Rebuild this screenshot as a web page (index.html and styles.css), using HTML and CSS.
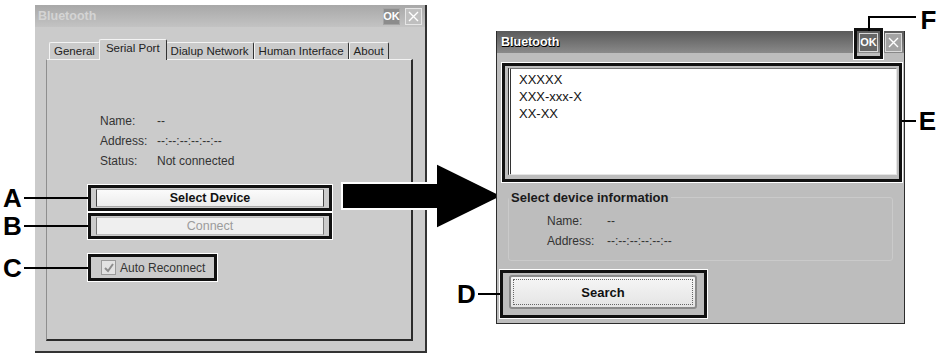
FILE: index.html
```html
<!DOCTYPE html>
<html lang="en">

<head>
    <meta charset="utf-8">
    <title>Bluetooth serial port settings</title>
    <link rel="stylesheet" href="styles.css">
</head>

<body>
    <div class="diagram">

        <!-- settings dialog, left -->
        <div class="win win-settings">
            <div class="titlebar">
                <span class="title">Bluetooth</span>
                <span class="tbtn tbtn-ok">OK</span>
                <span class="tbtn tbtn-close">
                    <svg width="11" height="11" viewBox="0 0 11 11"><path d="M1 1L10 10M10 1L1 10" /></svg>
                </span>
            </div>
            <div class="win-body">
                <div class="tabs">
                    <span class="tab">General</span>
                    <span class="tab active">Serial Port</span>
                    <span class="tab">Dialup Network</span>
                    <span class="tab">Human Interface</span>
                    <span class="tab">About</span>
                </div>
                <div class="tab-panel">
                    <dl class="info">
                        <dt>Name:</dt>
                        <dd>--</dd>
                        <dt>Address:</dt>
                        <dd>--:--:--:--:--:--</dd>
                        <dt>Status:</dt>
                        <dd>Not connected</dd>
                    </dl>

                    <div class="callout callout-a">
                        <span class="mark mark-left"><b>A</b><i></i></span>
                        <button class="btn btn-main">Select Device</button>
                    </div>
                    <div class="callout callout-b">
                        <span class="mark mark-left"><b>B</b><i></i></span>
                        <button class="btn btn-off">Connect</button>
                    </div>
                    <div class="callout callout-c">
                        <span class="mark mark-left"><b>C</b><i></i></span>
                        <label class="check">
                            <span class="box">
                                <svg width="12" height="12" viewBox="0 0 12 12"><path d="M2 6L5 9L10 2" /></svg>
                            </span>
                            Auto Reconnect
                        </label>
                    </div>
                </div>
            </div>
        </div>

        <!-- arrow between the two screens -->
        <svg class="arrow" width="170" height="76" viewBox="338 159 170 76">
            <polygon points="342,183 436,183 436,163 503,196 436,229 436,209 342,209" />
        </svg>

        <!-- search dialog, right -->
        <div class="win win-search">
            <div class="titlebar">
                <span class="title">Bluetooth</span>
                <span class="tbtn tbtn-ok">
                    OK
                    <span class="callout-f">
                        <span class="mark-f"><b>F</b></span>
                    </span>
                </span>
                <span class="tbtn tbtn-close">
                    <svg width="11" height="11" viewBox="0 0 11 11"><path d="M1 1L10 10M10 1L1 10" /></svg>
                </span>
            </div>
            <div class="win-body">
                <div class="callout callout-e">
                    <span class="mark mark-right"><i></i><b>E</b></span>
                    <div class="listbox">
                        <div>XXXXX</div>
                        <div>XXX-xxx-X</div>
                        <div>XX-XX</div>
                    </div>
                </div>

                <fieldset class="group">
                    <legend>Select device information</legend>
                    <dl class="info">
                        <dt>Name:</dt>
                        <dd>--</dd>
                        <dt>Address:</dt>
                        <dd>--:--:--:--:--:--</dd>
                    </dl>
                </fieldset>

                <div class="callout callout-d">
                    <span class="mark mark-left"><b>D</b><i></i></span>
                    <button class="btn btn-search"><span>Search</span></button>
                </div>
            </div>
        </div>

    </div>
</body>

</html>
```

FILE: styles.css
```css
* {
    box-sizing: border-box;
}

body {
    margin: 0;
    background: #fff;
    font-family: "Liberation Sans", Arial, sans-serif;
    font-size: 12px;
    color: #222;
}

.diagram {
    position: relative;
    width: 943px;
    height: 355px;
    overflow: hidden;
}

/* windows */
.win {
    position: absolute;
    display: flex;
    flex-direction: column;
}

.win-settings {
    left: 35px;
    top: 5px;
    width: 392px;
    height: 348px;
    background: #cbcbcb;
    border-right: 2px solid #333;
    border-bottom: 2px solid #333;
}

.win-search {
    left: 496px;
    top: 31px;
    width: 409px;
    height: 293px;
    background: #bdbdbd;
    border: 1px solid #2c2c2c;
    border-top: none;
}

.titlebar {
    height: 22px;
    flex: none;
    display: flex;
    align-items: center;
    gap: 5px;
    padding: 0 3px;
}

.win-settings .titlebar {
    background: linear-gradient(#a8a8a8, #c3c3c3);
}

.win-search .titlebar {
    background: linear-gradient(#5a5a5a, #8a8a8a);
    gap: 7px;
    padding: 0 2px 0 4px;
}

.title {
    flex: 1;
    font-weight: bold;
    font-size: 12.5px;
}

.win-settings .title {
    color: #d4d4d4;
}

.win-search .title {
    color: #fff;
    text-shadow: 1px 1px 0 #000, 0 1px 0 #000;
}

.tbtn {
    position: relative;
    width: 17px;
    height: 17px;
    display: flex;
    align-items: center;
    justify-content: center;
    font-size: 11px;
    font-weight: bold;
    color: #fff;
}

.tbtn svg path {
    stroke: #fff;
    stroke-width: 1.4;
    fill: none;
}

.win-settings .tbtn-ok {
    background: #8c8c8c;
    border: 1px solid #a4a4a4;
}

.win-settings .tbtn-close {
    background: #bfbfbf;
    border: 1px solid #e6e6e6;
}

.win-search .tbtn {
    width: 19px;
    height: 19px;
}

.win-search .tbtn-ok {
    background: #666;
    border: 1px solid #d8d8d8;
}

.win-search .tbtn-close {
    width: 17px;
    background: #a3a3a3;
    border: 1px solid #dadada;
}

.win-body {
    flex: 1;
    display: flex;
    flex-direction: column;
}

.win-settings .win-body {
    padding: 12px 0 0 11px;
}

/* tabs */
.tabs {
    display: flex;
    align-items: flex-end;
    height: 20px;
    padding-left: 3px;
}

.tab {
    height: 17px;
    padding: 0 4px;
    font-size: 11.5px;
    line-height: 17px;
    color: #222;
    border: 1px solid #f4f4f4;
    border-right-color: #333;
    border-bottom: none;
    border-radius: 2px 2px 0 0;
}

.tab.active {
    position: relative;
    z-index: 1;
    height: 21px;
    margin: 0 -1px -1px;
    padding: 0 6px;
    line-height: 17px;
    background: #cbcbcb;
}

.tab-panel {
    width: 367px;
    height: 282px;
    padding: 51px 0 0 41px;
    border: 1px solid #f2f2f2;
    border-left-color: #8e8e8e;
    border-right: 2px solid #2a2a2a;
    border-bottom: 2px solid #2a2a2a;
}

.info {
    display: grid;
    grid-template-columns: 57px auto;
    grid-auto-rows: 20px;
    align-items: center;
    margin: 0 0 0 12px;
    color: #333;
}

.info dt,
.info dd {
    margin: 0;
}

/* callout boxes drawn over the screens */
.callout {
    position: relative;
    border: 3px solid #111;
    box-shadow: 0 0 0 1px #fff;
}

.mark {
    position: absolute;
    top: 50%;
    display: flex;
    align-items: center;
    transform: translateY(-50%);
}

.mark b,
.mark-f b {
    font-size: 26px;
    line-height: 26px;
    color: #000;
}

.mark i {
    flex: 1;
    height: 2px;
    background: #000;
}

.mark-left {
    right: calc(100% + 3px);
    gap: 2px;
}

.mark-right {
    left: calc(100% + 3px);
    gap: 3px;
}

.callout-a .mark,
.callout-b .mark,
.callout-c .mark {
    width: 85px;
}

.callout-a {
    width: 244px;
    margin-top: 14px;
    padding: 1px 5px;
}

.callout-b {
    width: 244px;
    margin-top: 2px;
    padding: 1px 5px;
}

.callout-c {
    width: 129px;
    margin-top: 15px;
    padding: 2px 8px 2px 10px;
}

.btn {
    display: block;
    width: 100%;
    height: 18px;
    padding: 0;
    font-family: inherit;
    font-size: 12.5px;
    background: linear-gradient(#fbfbfb, #ececec);
    border: 1px solid #a8a8a8;
}

.btn-main {
    font-weight: bold;
    color: #111;
    border-left-color: #444;
    border-right-color: #444;
}

.btn-off {
    color: #9c9c9c;
    background: #efefef;
    border-color: #bdbdbd;
    border-left-color: #777;
    border-right-color: #777;
}

.check {
    display: flex;
    align-items: center;
    gap: 4px;
    height: 17px;
    color: #333;
}

.box {
    width: 15px;
    height: 15px;
    display: flex;
    align-items: center;
    justify-content: center;
    background: #e2e2e2;
    border: 1px solid #9a9a9a;
}

.box path {
    stroke: #8c8c8c;
    stroke-width: 2;
    fill: none;
}

/* arrow */
.arrow {
    position: absolute;
    left: 338px;
    top: 159px;
}

.arrow polygon {
    fill: #000;
    stroke: #fff;
    stroke-width: 2;
}

/* search dialog */
.callout-e {
    width: 400px;
    margin: 10px 0 0 5px;
    padding: 2px 2px 4px 3px;
}

.listbox {
    height: 107px;
    padding: 2px 0 0 8px;
    font-size: 13px;
    line-height: 17px;
    color: #111;
    background: #fff;
    border: 1px solid #e6e6e6;
    border-left: 3px double #333;
    border-top-color: #777;
}

.group {
    width: 385px;
    margin: 8px 0 0 11px;
    padding: 6px 0 9px;
    border: 1px solid #cacaca;
    border-radius: 3px;
}

.group legend {
    margin-left: 0;
    padding: 0 2px;
    font-size: 13px;
    font-weight: bold;
    color: #1a1a1a;
}

.group .info {
    grid-template-columns: 60px auto;
    margin: 0 0 0 38px;
}

.callout-d {
    width: 207px;
    margin: 9px 0 0 3px;
    padding: 2px 7px 6px 6px;
}

.callout-d .mark {
    width: 43px;
}

.btn-search {
    height: 34px;
    padding: 2px;
    font-size: 13px;
    font-weight: bold;
    color: #111;
    border: 2px solid #8a8a8a;
    border-radius: 3px;
    background: linear-gradient(#f6f6f6, #e4e4e4);
}

.btn-search span {
    display: flex;
    align-items: center;
    justify-content: center;
    height: 100%;
    border: 1px dotted #666;
}

.callout-e .mark {
    width: 34px;
    margin-top: -2px;
}

/* F marker sits around the OK button */
.callout-f {
    position: absolute;
    top: -6px;
    left: -6px;
    right: -6px;
    bottom: -8px;
    border: 3px solid #111;
    box-shadow: 0 0 0 1px #fff;
}

.mark-f {
    position: absolute;
    bottom: 100%;
    left: 50%;
    width: 48px;
    height: 15px;
    margin-left: -1px;
    border-left: 2px solid #000;
    border-top: 2px solid #000;
}

.mark-f b {
    position: absolute;
    left: 100%;
    top: -11px;
    margin-left: 5px;
}
```
